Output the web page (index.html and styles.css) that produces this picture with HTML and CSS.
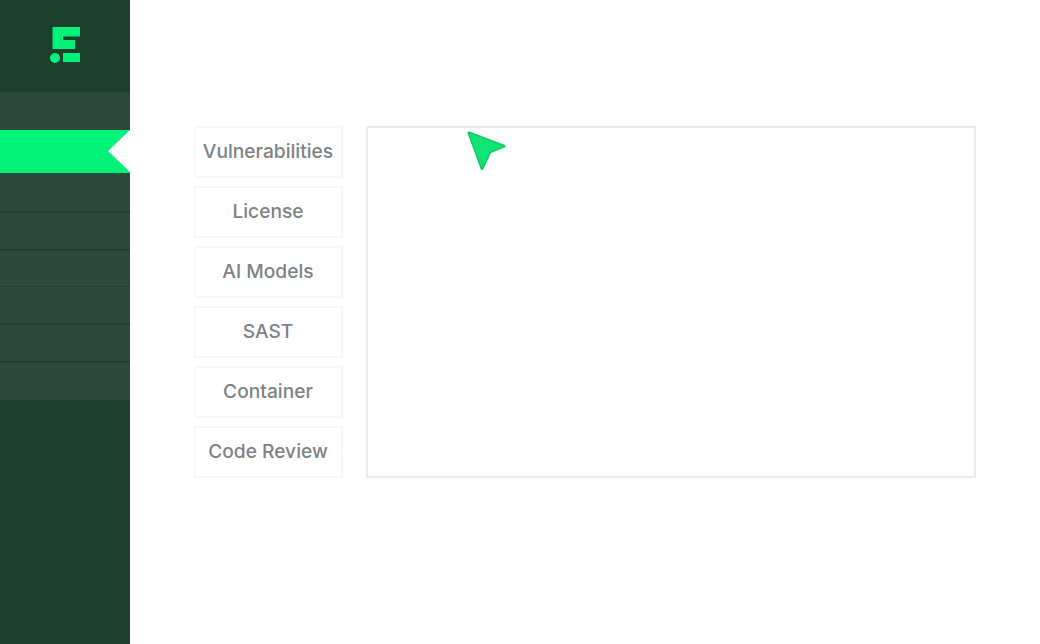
FILE: index.html
```html
<!DOCTYPE html>
<html lang="en">
<head>
<meta charset="utf-8">
<title>Scans</title>
<link rel="stylesheet" href="styles.css">
</head>
<body>
<div class="app">
  <aside class="sidebar">
    <div class="brand">
      <svg class="logo" width="32" height="38" viewBox="0 0 32 38" aria-hidden="true">
        <path d="M2.5 1H30V10.5H13V14H25V23H2.5Z" fill="#00f279"/>
        <circle cx="5" cy="32" r="5" fill="#00f279"/>
        <rect x="13" y="27" width="17" height="9" fill="#00f279"/>
      </svg>
    </div>
    <nav class="nav">
      <div class="nav-item h38"></div>
      <div class="nav-item active"></div>
      <div class="nav-item h39"></div>
      <div class="nav-item h37"></div>
      <div class="nav-item h36"></div>
      <div class="nav-item h37"></div>
      <div class="nav-item h37"></div>
      <div class="nav-item h36 last"></div>
    </nav>
  </aside>
  <main class="main">
    <div class="tabs">
      <div class="tab">Vulnerabilities</div>
      <div class="tab">License</div>
      <div class="tab">AI Models</div>
      <div class="tab">SAST</div>
      <div class="tab">Container</div>
      <div class="tab">Code Review</div>
    </div>
    <section class="panel"></section>
  </main>
  <svg class="cursor" width="44" height="44" viewBox="0 0 44 44" aria-hidden="true">
    <path d="M5 5 40 18.2 26 23.8 18 40.5Z" fill="#10e474" stroke="#10e474" stroke-width="3" stroke-linejoin="round"/>
    <path d="M4 4 41 18.2 26.5 24 18 41.5Z" fill="none" stroke="#16a862" stroke-width="0.6" stroke-linejoin="round"/>
  </svg>
</div>
</body>
</html>
```
FILE: styles.css
```css
html, body {
  margin: 0;
  height: 100%;
  background: #fff;
}
.app {
  display: flex;
  width: 1040px;
  height: 644px;
  overflow: hidden;
  font-family: Inter, "Liberation Sans", sans-serif;
}
.sidebar {
  width: 130px;
  flex: none;
  background: #1e3e2e;
  display: flex;
  flex-direction: column;
}
.brand {
  height: 92px;
  display: flex;
  justify-content: center;
  align-items: flex-start;
  padding: 26px 0 0 1px;
  box-sizing: border-box;
}
.logo {
  display: block;
}
.nav {
  display: flex;
  flex-direction: column;
}
.nav-item {
  background: #2c4a3b;
  border-bottom: 1px solid #22402f;
  box-sizing: border-box;
}
.h38 { height: 38px; border-bottom: 0; }
.h39 { height: 40px; border-bottom-width: 2px; }
.h37 { height: 38px; border-bottom-width: 2px; }
.h36 { height: 36px; border-bottom-width: 1px; }
.last { border-bottom: 0; height: 37px; }
.active {
  height: 43px;
  border-bottom: 0;
  background: #00f279;
  position: relative;
}
.active::after {
  content: "";
  position: absolute;
  right: 0;
  top: 0;
  border-style: solid;
  border-width: 21.5px 22px 21.5px 0;
  border-color: transparent #fff transparent transparent;
}
.main {
  flex: 1;
  display: flex;
  align-items: flex-start;
  gap: 23px;
  padding: 126px 0 0 64px;
}
.tabs {
  display: flex;
  flex-direction: column;
  gap: 8px;
}
.tab {
  width: 149px;
  height: 52px;
  box-sizing: border-box;
  border: 2px solid #f7f7f7;
  padding: 0 1px 2px 0;
  display: flex;
  align-items: center;
  justify-content: center;
  font-size: 19.2px;
  font-weight: 500;
  color: #7d8286;
  white-space: nowrap;
}
.panel {
  width: 610px;
  height: 352px;
  box-sizing: border-box;
  border: 2px solid #ebebeb;
}
.cursor {
  position: absolute;
  left: 464px;
  top: 128px;
}
```
